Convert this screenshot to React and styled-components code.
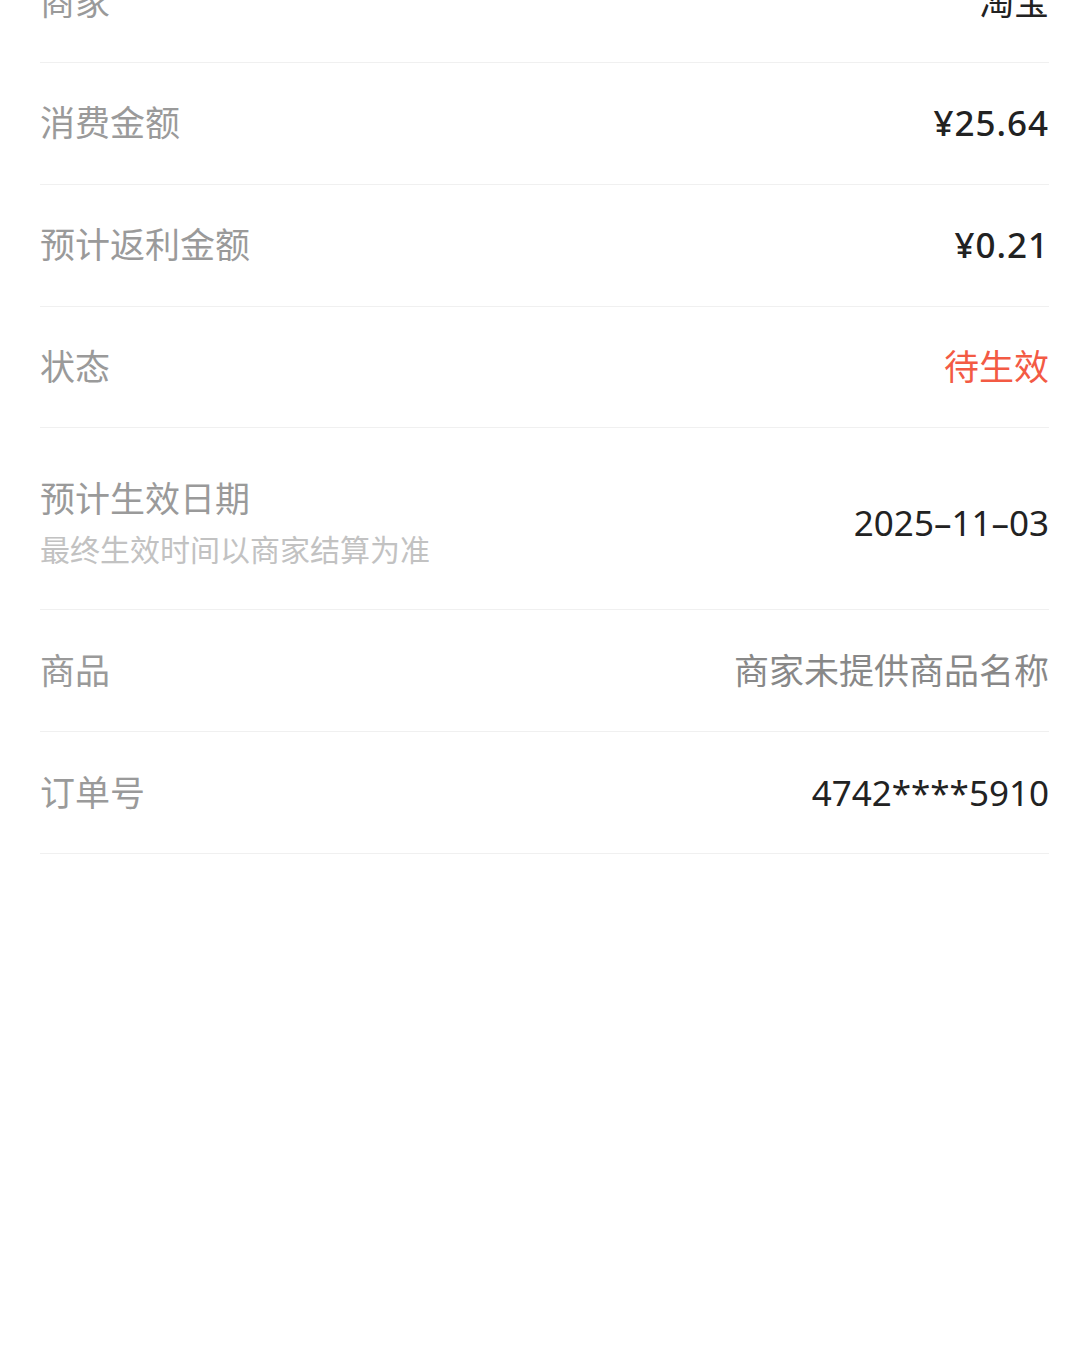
import styled, { createGlobalStyle } from 'styled-components'

const GlobalStyle = createGlobalStyle`
  html, body {
    margin: 0;
    padding: 0;
    background: #fff;
  }
  body {
    font-family: "Noto Sans", "Noto Sans CJK SC", sans-serif;
    -webkit-font-smoothing: antialiased;
  }
`;

const Page = styled.div`
  width: 1090px;
  min-height: 1364px;
  background: #fff;
  overflow: hidden;
`;

const List = styled.div`
  margin-top: -58.8px;
  padding: 0 41px 0 40px;
  display: flex;
  flex-direction: column;
`;

const Row = styled.div`
  display: flex;
  align-items: center;
  justify-content: space-between;
  min-height: ${p => (p.$tall ? 182 : 121.8)}px;
  padding: ${p => (p.$tall ? '45px 0 37px' : '0')};
  box-sizing: border-box;
  border-bottom: 1px solid #f0f0f0;
`;

const LabelBox = styled.div`
  display: flex;
  flex-direction: column;
  gap: 6px;
`;

const Label = styled.div`
  font-size: 35px;
  line-height: 48px;
  color: #9a9a9a;
`;

const Hint = styled.div`
  font-size: 30px;
  line-height: 42px;
  color: #c2c2c2;
`;

const Value = styled.div`
  font-size: 35px;
  line-height: 48px;
  color: ${p => p.$color || '#222'};
  font-weight: ${p => (p.$bold ? 500 : 400)};
  letter-spacing: ${p => (p.$bold ? '1px' : '0')};
  text-align: right;
`;

const rows = [
  { label: '商家', value: '淘宝' },
  { label: '消费金额', value: '¥25.64', bold: true },
  { label: '预计返利金额', value: '¥0.21', bold: true },
  { label: '状态', value: '待生效', color: '#f35a44' },
  { label: '预计生效日期', hint: '最终生效时间以商家结算为准', value: '2025–11–03' },
  { label: '商品', value: '商家未提供商品名称', color: '#888' },
  { label: '订单号', value: '4742****5910' },
];

export default function App() {
  return (
    <Page>
      <GlobalStyle />
      <List>
        {rows.map(r => (
          <Row key={r.label} $tall={!!r.hint}>
            <LabelBox>
              <Label>{r.label}</Label>
              {r.hint && <Hint>{r.hint}</Hint>}
            </LabelBox>
            <Value $color={r.color} $bold={r.bold}>{r.value}</Value>
          </Row>
        ))}
      </List>
    </Page>
  );
}
